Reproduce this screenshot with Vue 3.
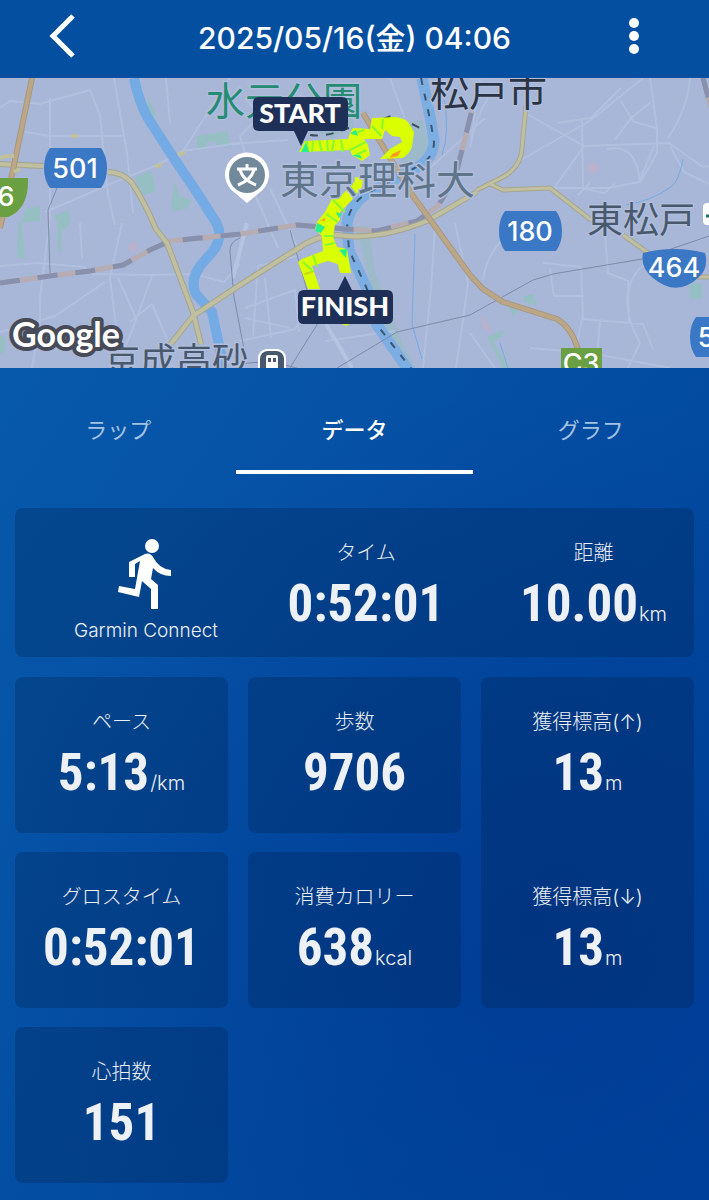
<template>
  <div class="app">
    <header class="header">
      <button class="icon-button" type="button" aria-label="戻る">
        <svg width="44" height="48" viewBox="0 0 44 48">
          <path d="M27 4L7 24l20 20" fill="none" stroke="#fff" stroke-width="5" />
        </svg>
      </button>
      <h1 class="title">2025/05/16(金) 04:06</h1>
      <button class="icon-button" type="button" aria-label="メニュー">
        <svg width="44" height="48" viewBox="0 0 44 48">
          <circle cx="15" cy="11" r="5" fill="#fff" />
          <circle cx="15" cy="24" r="5" fill="#fff" />
          <circle cx="15" cy="37" r="5" fill="#fff" />
        </svg>
      </button>
    </header>

    <svg class="map" viewBox="0 0 709 290" role="img" aria-label="コース地図">
      <rect width="709" height="290" fill="#a8b6d7" />

      <g fill="#96bfc3">
        <path d="M148 18l7 18-1 12-6-14zM197 58l30-5 4 16-15-1-1-6-9 3 1 7-10-2zM134 100l17-7 5 20-14 4zM175 103l4 15 12 4-3 8-15 4-2-8zM26 131l14-3v15l-20 2zM54 138l14-6 3 13-8 8z" />
        <path d="M18 145l-1 35 8 1-2-20-2-16zM26 195l7 4-3-4zM57 145l5 0-1 30-3-2zM0 258l5 1v14l-5 4zM690 206l12-1v16l-13-1zM524 218l9-2 5 12-14-4zM506 224l13 6-6 9zM487 259l17-7-1 6-10 6 17 26h-7z" />
      </g>
      <g fill="#9cbac9">
        <path d="M320 32q14-8 30-8l4 26-24 10-14-8zM408 44l14-2 8 26-12 14-18 4 12-24z" />
        <path d="M356 148l12 0 8 50 12 26 16 46 12 20h-16l-20-30-8-50zM347 147l20-25 16-18-26 8-14 22z" />
      </g>
      <g fill="#b8b2cf">
        <circle cx="133" cy="169" r="5" />
        <circle cx="593" cy="90" r="6" />
        <path d="M480 236l8 10 4 10-9-5z" />
      </g>

      <!-- minor streets -->
      <g fill="none" stroke="#b0c0de" stroke-width="2">
        <path d="M0 30l10-7 30 3 50-14 10 25 8 80 7 30M50 20v120l-10 80v25l-8 45M25 54l25 4h72M114 0l13 75 6 60M166 0l4 45M230 0l-47 73-28 15-40 16-70 30M183 73l57-8" />
        <path d="M0 188l38-3 46 4 8 7 60 1 42-1 30 8 16-18M80 145l2 35M105 204l-50 34-55 16M122 145l-12 55 10 80M152 198l-22 60-15 32M118 200l18 40M152 226l-22 18M152 226l15 35M245 20l15 18-20 20 12 40M230 66l58-4M270 110l28 60M248 100l30 70M390 0l22 60M298 178l-40 10-5 70M245 230l50-18 4 42M240 263l55-12 25-50M265 200l6 60M395 253l-70 10M245 240l45 10" />
        <path d="M480 0l-10 70M527 36l57 32 85-3 34 24 6-1M557 45l34-5 30-30M470 70q5-30 18-50M584 68l-30 42h55l30-6 15-36M521 82l70-40 52-42M650 0l7 50v25l-17 30M620 22l14 22 22 6M615 62l16-22 20-16M607 71q30-6 33 34M590 105l-12 12M583 110l-1-70M585 111l20 4 10-10M668 60q20-30 22-60M670 68l14 26 25 12M504 160q-18 18-21 42M543 185l38 4 2 52 60 5 10 25M550 190l4 28h30M605 155l3 40 20 8 1 40M650 181q-40 30-10 84l-12 25M582 241l-10 49M600 243l-4 47M455 145l13 60-4 30-8 55M435 150l-4 60-8 80M430 90l55-50M470 255l25 35M530 270l60 5 80 15" />
      </g>
      <path d="M326 246l26 44M247 145l-14 55" fill="none" stroke="#b5c4e1" stroke-width="4" />

      <!-- rivers -->
      <g fill="none" stroke="#74abe4">
        <path d="M134 0Q140 30 153 48L175 82 198 116 217 146Q225 163 206 181 188 200 196 216L212 234 224 290" stroke-width="10" />
        <path d="M422 0L430 38 434 62Q434 80 416 90L376 111Q351 122 347 145L349 172 367 211 377 247 410 294" stroke="#7cade3" stroke-width="11" />
        <path d="M683 81q-4 22-12 28-20 14-45 18M415 156l-3 90 10 35M500 265l8 25M444 20q6 35-2 57" stroke-width="1" />
      </g>
      <path d="M421 0l10 46 3 18q0 15-14 23l-42 23q-27 10-31 35l2 27 18 39 10 36 36 46" fill="none" stroke="#3b5670" stroke-width="2" stroke-dasharray="7 9" />

      <!-- railways -->
      <g fill="none">
        <path d="M0 205L50 198 90 193 123 187 150 172 170 163 240 156 297 147 345 151 377 153 417 143 438 128 455 100 472 32M703 0l8 30" stroke="#b6acb1" stroke-width="5" />
        <path d="M0 205L50 198 90 193 123 187 150 172 170 163 240 156 297 147 345 151 377 153 417 143 438 128 455 100 472 32M703 0l8 30" stroke="#8790ac" stroke-width="5" stroke-dasharray="20 18" />
        <path d="M57 110l-9 22 2 63M240 160q-11 4-10 14l4 45 10 52M290 152l27 95q-10 15-27 43M337 290l60-36 73-17 63-35 20-6 89-15 67-23M240 286q30-5 60 5" stroke="#7e8ca9" stroke-width="1" />
        <path d="M310 57q14 2 30-4l12-4M383 41l8-3M412 46l8 4" stroke="#3d5061" stroke-width="2" stroke-dasharray="8 8" />
      </g>

      <!-- main roads -->
      <g fill="none" stroke-linejoin="round">
        <g stroke="#a6a58e" stroke-width="6">
          <path d="M0 86l43 2M108 94q14 0 24 11 12 18 24 46l11 14 26 69 8 32M170 267l23-29 47-31 57-36q20-14 40-14 40 6 90-14l50-29" />
          <path d="M477 112l24-12q20-10 21-30l4-42M490 106l13 6 47-2 41 32M623 157l28 20M697 199h12" stroke-width="5" />
        </g>
        <g stroke="#c0c0a0" stroke-width="4">
          <path d="M0 86l43 2M108 94q14 0 24 11 12 18 24 46l11 14 26 69 8 32M170 267l23-29 47-31 57-36q20-14 40-14 40 6 90-14l50-29" />
          <path d="M477 112l24-12q20-10 21-30l4-42M490 106l13 6 47-2 41 32M623 157l28 20M697 199h12" stroke-width="3" />
        </g>
        <path d="M32 0L13 92 0 150M363 35L387 75 413 118 434 147 470 197 483 211 503 224 557 241Q572 250 578 272" stroke="#a9977e" stroke-width="6" />
        <path d="M32 0L13 92 0 150M363 35L387 75 413 118 434 147 470 197 483 211 503 224 557 241Q572 250 578 272" stroke="#bba788" stroke-width="4" />
        <path d="M71 58h7M155 89l7-3M178 77l7-3M0 80l6-2h8M14 94l6-3" stroke="#c0c09a" stroke-width="4" />
      </g>

      <!-- course -->
      <path v-for="shape in course" :key="shape" :d="shape" fill="#d9ff00" />
      <path
        d="M307 63l1 11M313 63l-1 11M319 62l3 12M327 62l1 12M334 62l-2 12M341 62l2 12M352 56l12-4M350 72l16-8M354 78l12-6M372 48l9 10M383 41l-1 10M333 122l12 12M326 136l12 8M324 158l10 0M325 167l10-2M313 177l4 12M303 184l9 8M305 196l9-3M333 245h5"
        fill="none" stroke="#85fa30" stroke-width="2"
      />
      <path d="M301 74l5-10 3 10zM350 55l6-3 2 6zM336 134l6 2-3 4zM317 145l8 4-4 6-6-2zM339 172l8-1-1 9zM352 77l8 0 2 4z" fill="#29ee8c" />
      <path d="M392 76l9-4-3 6-8 2zM320 143l5-3v3z" fill="#ff9d18" />
      <path d="M304 196l9-2" fill="none" stroke="#ffc200" stroke-width="1" />

      <!-- area names -->
      <g class="place">
        <text x="206" y="37" class="park">水元公園</text>
        <text x="430" y="28" class="city">松戸市</text>
        <text x="280" y="116" class="school">東京理科大</text>
        <text x="587" y="155" class="station">東松戸</text>
        <text x="104" y="296" class="station">京成高砂</text>
      </g>

      <!-- pins -->
      <path d="M247 125q-5-4-12-10a22 22 0 1 1 24 0q-7 6-12 10z" fill="#fff" />
      <circle cx="247" cy="97" r="18" fill="#71899a" />
      <path d="M237 91h20M247 86v5M240 92q3 10 16 15M254 92q-3 10-16 15" fill="none" stroke="#fff" stroke-width="3" />
      <rect x="258" y="271" width="28" height="28" rx="9" fill="#fff" />
      <rect x="260" y="273" width="24" height="28" rx="8" fill="#47586c" />
      <rect x="266" y="277" width="12" height="14" rx="2" fill="#fff" />
      <path d="M268 280h3v4h-3zM273 280h3v4h-3z" fill="#47586c" />
      <rect x="703" y="125" width="20" height="22" rx="4" fill="#fff" />
      <path d="M706 138h4" stroke="#18775c" stroke-width="3" />

      <!-- road numbers -->
      <g fill="#3a77c5">
        <path d="M50 70h51q6 8 6 20t-6 20H50q-6-8-6-20t6-20z" />
        <path d="M505 133h51q6 8 6 20t-6 20h-51q-6-8-6-20t6-20z" />
        <path d="M643 175q31-8 62 0 4 15-6 24-22 21-46 1-13-11-10-25z" />
        <path d="M696 239h51q6 8 6 20t-6 20h-51q-6-8-6-20t6-20z" />
      </g>
      <path d="M0 100h28q1 31-20 39H0zM561 270h41v30h-41z" fill="#6a9f42" />
      <g class="road-no">
        <text x="75" y="100">501</text>
        <text x="530" y="163">180</text>
        <text x="674" y="199">464</text>
        <text x="706" y="269">5</text>
        <text x="6" y="128">6</text>
        <text x="581" y="295">C3</text>
      </g>

      <!-- start and finish flags -->
      <path d="M259 19h83q6 0 6 6v22q0 6-6 6h-34l-7 15-7-15h-35q-6 0-6-6V25q0-6 6-6z" fill="#1e3057" />
      <path d="M304 212h34l7-14 7 14h35q6 0 6 6v22q0 6-6 6h-83q-6 0-6-6v-22q0-6 6-6z" fill="#1e3057" />
      <g class="flag">
        <text x="300" y="45">START</text>
        <text x="345" y="238">FINISH</text>
      </g>
      <text class="google" x="12" y="269">Google</text>
    </svg>

    <nav class="tabs" role="tablist">
      <button
        v-for="tab in tabs"
        :key="tab"
        type="button"
        role="tab"
        class="tab"
        :class="{ active: tab === current }"
        :aria-selected="tab === current"
        @click="current = tab"
      >{{ tab }}</button>
    </nav>

    <main class="content">
      <section class="card summary">
        <div class="source">
          <svg width="54" height="70" viewBox="0 0 54 70" fill="#fff">
            <circle cx="33" cy="7" r="7" />
            <path d="M10 23L26 15q5-2 8 3 6 12 18 13v6Q41 37 34 29L32 40l7 6v24h-7V50l-9-8-3 16L-1 53l1-6 16 3 5-28-5 3v13h-6z" />
          </svg>
          <span class="source-name">Garmin Connect</span>
        </div>
        <div class="metric">
          <span class="label">タイム</span>
          <span class="value">0:52:01</span>
        </div>
        <div class="metric distance">
          <span class="label">距離</span>
          <span class="value">10.00<small>km</small></span>
        </div>
      </section>

      <section class="grid">
        <div v-for="card in cards" :key="card[0].label" class="card" :class="{ tall: card.length > 1 }">
          <div v-for="item in card" :key="item.label" class="metric">
            <span class="label">{{ item.label }}</span>
            <span class="value">{{ item.value }}<small v-if="item.unit">{{ item.unit }}</small></span>
          </div>
        </div>
      </section>
    </main>
  </div>
</template>

<script setup>
import { ref } from 'vue'

const tabs = ['ラップ', 'データ', 'グラフ']
const current = ref('データ')

const cards = [
  [{ label: 'ペース', value: '5:13', unit: '/km' }],
  [{ label: '歩数', value: '9706' }],
  [
    { label: '獲得標高(↑)', value: '13', unit: 'm' },
    { label: '獲得標高(↓)', value: '13', unit: 'm' }
  ],
  [{ label: 'グロスタイム', value: '0:52:01' }],
  [{ label: '消費カロリー', value: '638', unit: 'kcal' }],
  [{ label: '心拍数', value: '151' }]
]

const course = [
  'M299 74L305 63 348 61 350 55 353 50 370 51 372 40 395 39Q404 40 408 44L414 54 412 69Q408 78 402 80L380 81 390 71 402 64 400 59 392 58 385 52 382 61 364 61 368 67 370 77 362 83 352 77 350 72z',
  'M355 99l8 1-1 9-10 13-12 12v8l-5 5-2 12 4 10 10 2 4 24h-11l-2-9-10-3-16 5 8 23h-12l-10-27 4-3 21-8-1-15-7-7 2-7 8-10 7-13 11-5 12-13z',
  'M336 243h18l-8 5z'
]
</script>

<style>
body {
  margin: 0;
  background: #00409a;
}
</style>

<style scoped>
.app {
  min-height: 100vh;
  color: #edf0f4;
  font-family: Inter, "Noto Sans CJK JP", sans-serif;
  background:
    radial-gradient(circle at 75% 77%, rgba(0, 50, 145, 0.5), transparent 50%),
    linear-gradient(125deg, #075bac 10%, #0551a5 45%, #00489d 75%, #00439b);
}

.header {
  display: flex;
  align-items: center;
  justify-content: space-between;
  box-sizing: border-box;
  height: 78px;
  padding: 0 46px 6px;
  background: #054fa1;
}

.icon-button {
  display: flex;
  padding: 0;
  border: 0;
  background: none;
  cursor: pointer;
}

.title {
  margin: 0;
  color: #fff;
  font-size: 30px;
  font-weight: 500;
}

.map {
  display: block;
  width: 100%;
  height: auto;
}

.place text {
  paint-order: stroke;
  stroke: #b0bddb;
  stroke-width: 3px;
  font-family: "Noto Sans CJK JP", sans-serif;
}

.place .park {
  fill: #238c72;
  font-size: 39px;
}

.place .city {
  fill: #293445;
  font-size: 39px;
}

.place .school {
  fill: #5d7489;
  font-size: 39px;
}

.place .station {
  fill: #48596e;
  font-size: 36px;
}

.road-no text {
  fill: #fff;
  font-size: 27px;
  font-weight: 500;
  text-anchor: middle;
}

.flag text {
  fill: #fff;
  font-family: Lato, sans-serif;
  font-size: 27px;
  font-weight: 900;
  text-anchor: middle;
}

.google {
  fill: #fff;
  stroke: #474b58;
  stroke-width: 8px;
  stroke-linejoin: round;
  paint-order: stroke;
  font-family: Lato, sans-serif;
  font-size: 34px;
  font-weight: 700;
}

.tabs {
  display: grid;
  grid-template-columns: repeat(3, 1fr);
}

.tab {
  height: 106px;
  padding: 18px 0 0;
  border: 0;
  border-bottom: 4px solid transparent;
  background: none;
  color: #a5c2e2;
  font-family: inherit;
  font-size: 22px;
  cursor: pointer;
}

.tab.active {
  border-bottom-color: #fff;
  color: #fff;
  font-weight: 500;
}

.content {
  padding: 34px 15px 16px;
}

.card {
  border-radius: 8px;
  background: rgba(0, 28, 72, 0.27);
}

.summary {
  display: grid;
  grid-template-columns: 262fr 178fr 239fr;
  height: 149px;
  margin-bottom: 20px;
}

.source {
  display: flex;
  flex-direction: column;
  align-items: center;
  padding-top: 31px;
}

.source svg {
  overflow: visible;
}

.source-name {
  margin-top: 10px;
  font-size: 19px;
  line-height: 24px;
  font-weight: 300;
}

.grid {
  display: grid;
  grid-template-columns: repeat(3, 1fr);
  grid-auto-rows: 156px;
  gap: 19px 20px;
}

.tall {
  display: grid;
  grid-row: span 2;
  grid-template-rows: 1fr 1fr;
  row-gap: 19px;
}

.metric {
  display: flex;
  flex-direction: column;
  align-items: center;
  padding-top: 31px;
}

.distance {
  padding-left: 38px;
}

.label {
  font-size: 20px;
  line-height: 28px;
  font-weight: 300;
}

.value {
  margin-top: 7px;
  font-family: "Roboto Condensed", "Liberation Sans Narrow", Roboto, sans-serif;
  font-size: 51px;
  line-height: 60px;
  font-weight: 700;
  white-space: nowrap;
}

.value small {
  margin-left: 1px;
  font-family: Inter, sans-serif;
  font-size: 20px;
  font-weight: 300;
}
</style>
